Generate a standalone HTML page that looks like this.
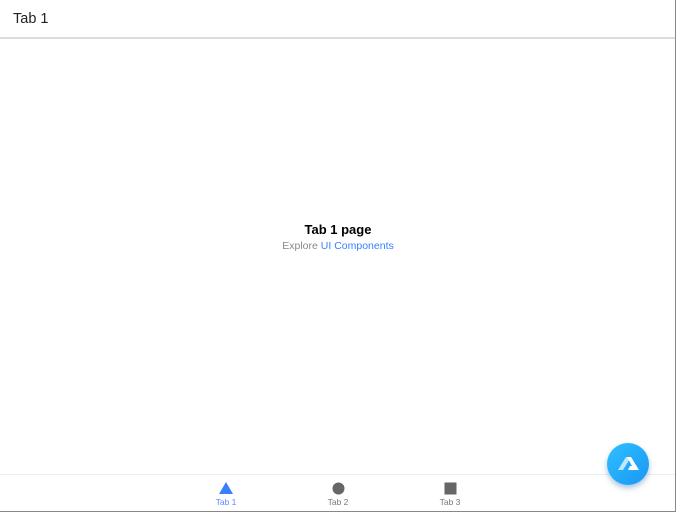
<!DOCTYPE html>
<html><head><style>
html,body{margin:0;padding:0;width:676px;height:512px;overflow:hidden;background:#fff;font-family:"Liberation Sans",Roboto,sans-serif;}
.wrap{position:absolute;left:0;top:0;width:675px;height:511px;border-right:1px solid #888;border-bottom:1px solid #888;}
.hdr{position:absolute;left:0;top:0;width:675px;height:37px;border-bottom:2px solid #dcdcdc;}
.hdr span{position:absolute;left:13px;top:11px;font-size:14.5px;color:#222;}
.c{position:absolute;left:0;width:676px;text-align:center;}
.t1{top:222px;font-size:13px;font-weight:bold;color:#000;}
.t2{top:240px;font-size:10.5px;color:#888;}
.t2 a{color:#3880ff;text-decoration:none;}
.tabs{position:absolute;left:0;top:474px;width:675px;height:37px;border-top:1px solid #eee;}
.tab{position:absolute;top:0;width:60px;text-align:center;font-size:8.5px;color:#777;}
.tab svg{display:block;margin:7px auto 2px;}
.fab{position:absolute;left:607px;top:443px;width:42px;height:42px;border-radius:50%;background:linear-gradient(135deg,#2fc0ff,#1a96f5);box-shadow:0 3px 6px rgba(0,80,160,.35);}
</style></head><body>
<div class="wrap">
<div class="hdr"><span>Tab 1</span></div>
<div class="c t1">Tab 1 page</div>
<div class="c t2">Explore <a>UI Components</a></div>
<div class="tabs">
<div class="tab" style="left:196px;color:#5a8cff"><svg width="14" height="13"><polygon points="7,0 14,12 0,12" fill="#3880ff"/></svg>Tab 1</div>
<div class="tab" style="left:308px"><svg width="13" height="13"><circle cx="6.5" cy="6.5" r="6" fill="#666"/></svg>Tab 2</div>
<div class="tab" style="left:420px"><svg width="13" height="13"><rect x="0.5" y="0.5" width="12" height="12" fill="#666"/></svg>Tab 3</div>
</div>
<div class="fab"><svg width="42" height="42"><polygon points="11,27 19,14 24,14 16,27" fill="#bfe8ff"/><polygon points="20,14 24,14 32,27 21,27 23,23 25,23" fill="#fff"/></svg></div>
</div>
</body></html>
